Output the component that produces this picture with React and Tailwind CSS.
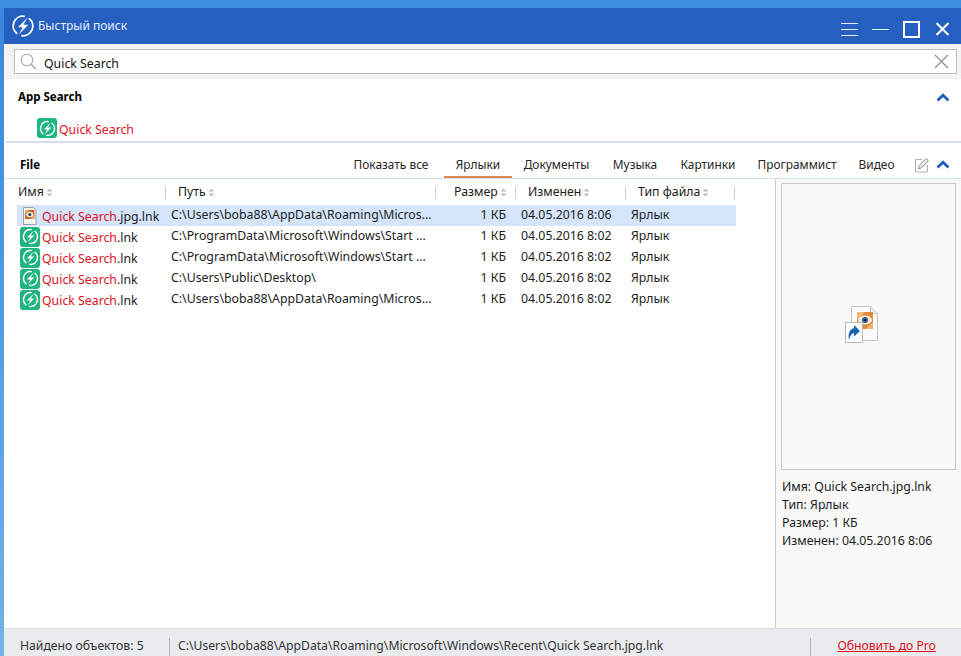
import React from 'react';

const FONT = "font-['Noto_Sans',sans-serif]";

const columns = [
  { label: 'Имя', width: 'w-[149px]', pad: 'pl-[1px]' },
  { label: 'Путь', width: 'w-[270px]', pad: 'pl-[12px]' },
  { label: 'Размер', width: 'w-[80px]', pad: 'pl-[18px]' },
  { label: 'Изменен', width: 'w-[110px]', pad: 'pl-[12px]' },
  { label: 'Тип файла', width: 'w-[109px]', pad: 'pl-[12px]' },
];

const rows = [
  { icon: 'jpg', ext: '.jpg.lnk', path: 'C:\\Users\\boba88\\AppData\\Roaming\\Micros...', date: '04.05.2016 8:06', selected: true },
  { icon: 'app', ext: '.lnk', path: 'C:\\ProgramData\\Microsoft\\Windows\\Start ...', date: '04.05.2016 8:02' },
  { icon: 'app', ext: '.lnk', path: 'C:\\ProgramData\\Microsoft\\Windows\\Start ...', date: '04.05.2016 8:02' },
  { icon: 'app', ext: '.lnk', path: 'C:\\Users\\Public\\Desktop\\', date: '04.05.2016 8:02' },
  { icon: 'app', ext: '.lnk', path: 'C:\\Users\\boba88\\AppData\\Roaming\\Micros...', date: '04.05.2016 8:02' },
];

const tabs = [
  { label: 'Показать все', width: 'w-[104px] pr-[2px]' },
  { label: 'Ярлыки', width: 'w-[68px]', active: true },
  { label: 'Документы', width: 'w-[89px]' },
  { label: 'Музыка', width: 'w-[68px]' },
  { label: 'Картинки', width: 'w-[78px]' },
  { label: 'Программист', width: 'w-[100px]' },
  { label: 'Видео', width: 'w-[59px]' },
];

const details = ['Имя: Quick Search.jpg.lnk', 'Тип: Ярлык', 'Размер: 1 КБ', 'Изменен: 04.05.2016 8:06'];

// ring broken at top right and bottom left, bolt runs through the gaps
const Bolt = ({ size, color, stroke = 2 }) => (
  <svg width={size} height={size} viewBox="0 0 24 24" fill="none">
    <path d="M13 2.300A9.700 9.700 0 0 0 5.600 19.300" stroke={color} strokeWidth={stroke} strokeLinecap="round" />
    <path d="M11 21.700A9.700 9.700 0 0 0 18.400 4.700" stroke={color} strokeWidth={stroke} strokeLinecap="round" />
    <path d="M16.500 3.500 7 13.300h4.800L7.800 20.500 17.300 10.700h-4.800z" fill={color} />
  </svg>
);

const AppIcon = ({ size = 20 }) => (
  <span className="flex shrink-0 items-center justify-center rounded-[3px] bg-[#1fb57f]" style={{ width: size, height: size }}>
    <Bolt size={size - 3} color="#ffffff" />
  </span>
);

const JpgIcon = () => (
  <svg width="20" height="20" viewBox="0 0 20 20" className="shrink-0">
    <path d="M3.500 1.500h10l2.500 2.500v14.500H3.500z" fill="#f8f6f2" stroke="#a0a0a0" />
    <rect x="5" y="4" width="9.500" height="9" fill="#c9662a" />
    <path d="M5 4h4L5 8zM14.500 13h-4l4-4z" fill="#e9b070" />
    <ellipse cx="9.800" cy="8.500" rx="3.600" ry="2.800" fill="#f7ead6" />
    <circle cx="9.800" cy="8.500" r="1.600" fill="#27406e" />
  </svg>
);

const PreviewIcon = () => (
  <svg width="34" height="38" viewBox="0 0 34 38">
    <path d="M6.500 1.500h19l7 7v27h-26z" fill="#fbfbfb" stroke="#c4c4c4" />
    <path d="M25.500 1.500v7h7" fill="#ececec" stroke="#c4c4c4" />
    <path d="M12 7h16v17H12z" fill="#e08a3c" />
    <path d="M12 7h8l-8 8zM28 24h-7l7-7z" fill="#f0b878" />
    <ellipse cx="20" cy="15" rx="7" ry="4.500" fill="#f7ead6" />
    <circle cx="20" cy="15" r="3" fill="#2f5f9c" />
    <circle cx="20" cy="15" r="1.300" fill="#10203c" />
    <rect x="0.500" y="17.500" width="17" height="20" fill="#ffffff" stroke="#b8b8b8" />
    <path d="M4 35c-1.200-6.500.5-10.500 5-12v-3l6 6-6 5.500v-3.500c-2.500.8-4 3-5 7z" fill="#1b5fb0" />
  </svg>
);

const SortMark = () => (
  <svg width="7" height="9" viewBox="0 0 7 9" className="ml-[2px] shrink-0">
    <path d="M3.500.5 6.500 3.500h-6zM3.500 8.500.5 5.500h6z" fill="#b9bdc4" />
  </svg>
);

const CollapseArrow = () => (
  <svg width="14" height="9" viewBox="0 0 14 9" fill="none">
    <path d="M1.500 7.500 7 2.300l5.500 5.200" stroke="#1f5fb8" strokeWidth="2.800" />
  </svg>
);

const App = () => {
  return (
    <div className={`flex h-[656px] w-[961px] flex-col overflow-hidden bg-[#3f8de0] text-[12.3px] text-[#1c1c1c] ${FONT}`}>
      <div className="h-2 shrink-0 bg-[#3f8de0]" />

      <div className="flex min-h-0 flex-1 bg-gradient-to-b from-[#3a86dc] to-[#6fb3e6]">
        <div className="w-1 shrink-0" />

        <div className="flex min-w-0 flex-1 flex-col bg-white">
          {/* Title bar */}
          <div className="flex h-9 shrink-0 items-center bg-[#2560c0] pl-[7px] pr-[12px] text-white">
            <Bolt size={24} color="#ffffff" stroke={1.8} />
            <span className="mb-[1px] ml-[3px] text-[12px] text-[#e6edf9]">Быстрый поиск</span>
            <div className="ml-auto mt-[6px] flex items-center">
              <svg width="17" height="13" viewBox="0 0 17 13" className="text-[#e6edf9]">
                <path d="M0 .5h17M0 6.500h17M0 12.500h17" stroke="currentColor" strokeWidth="1" />
              </svg>
              <svg width="17" height="1" viewBox="0 0 17 1" className="ml-[14px]">
                <path d="M0 .5h17" stroke="#ffffff" strokeWidth="1" />
              </svg>
              <span className="ml-[14px] h-[17px] w-[17px] border-2 border-white" />
              <svg width="13" height="14" viewBox="0 0 13 14" className="ml-[16px]">
                <path d="M.5 1l12 12M12.500 1 .5 13" stroke="#ffffff" strokeWidth="2" />
              </svg>
            </div>
          </div>

          {/* Search */}
          <div className="flex h-[35px] shrink-0 items-center bg-[#f3f3f3] pl-[10px] pr-[4px]">
            <div className="flex h-[25px] flex-1 items-center border border-[#bdbdbd] bg-white pl-[5px] pr-[7px]">
              <svg width="17" height="17" viewBox="0 0 17 17" fill="none" className="text-[#a9a9a9]">
                <circle cx="7" cy="7" r="5.800" stroke="currentColor" strokeWidth="1.100" />
                <path d="M11.200 11.200 16 16" stroke="currentColor" strokeWidth="1.500" />
              </svg>
              <span className="ml-[7px] mt-[5px] text-[#111111]">Quick Search</span>
              <svg width="15" height="15" viewBox="0 0 15 15" className="ml-auto">
                <path d="M1 1l13 13M14 1 1 14" stroke="#8f8f8f" strokeWidth="1.300" />
              </svg>
            </div>
          </div>

          {/* App Search */}
          <div className="h-[62px] shrink-0">
            <div className="flex h-[34px] items-center justify-between pl-[14px] pr-[11px] pt-[2px]">
              <span className="text-[11.5px] font-bold text-black">App Search</span>
              <CollapseArrow />
            </div>
            <div className="mt-[4px] flex items-center pl-[33px]">
              <AppIcon />
              <span className="ml-[2px] mt-[4px] text-[#e0101c]">Quick Search</span>
            </div>
          </div>

          <div className="ml-[2px] h-[2px] shrink-0 bg-[#d3deef]" />

          {/* File row with tabs */}
          <div className="flex h-[36px] shrink-0 items-stretch border-b border-[#d3e0ee] pl-[16px] pr-[11px] pt-[8px]">
            <span className="flex items-center text-[11.5px] font-bold text-black">File</span>
            <div className="ml-auto flex items-stretch">
              {tabs.map((tab) => (
                <span
                  key={tab.label}
                  className={`flex items-center justify-center text-[11.9px] text-[#262626] ${tab.width} ${tab.active ? 'border-b-2 border-[#e08a4b] pt-[2px]' : ''}`}
                >
                  {tab.label}
                </span>
              ))}
              <span className="ml-[8px] flex items-center">
                <svg width="16" height="16" viewBox="0 0 16 16" fill="none">
                  <path d="M8 2.500H1.500v12.500h12V8" stroke="#b0b0b0" />
                  <path d="M4.500 12l.8-3.500L11.800 1.800c.8-.8 2.900 1.300 2.200 2.200L7.500 10.800z" fill="#ececec" stroke="#8f8f8f" />
                </svg>
              </span>
              <span className="ml-[6px] flex items-center">
                <CollapseArrow />
              </span>
            </div>
          </div>

          {/* Main */}
          <div className="flex min-h-0 flex-1">
            <div className="flex w-[772px] shrink-0 flex-col border-r border-[#c4c9ce] pl-[13px]">
              <div className="flex h-[26px] w-[719px] shrink-0 items-center">
                {columns.map((col) => (
                  <div key={col.label} className={`flex h-[13px] items-center border-r border-[#cfcfcf] ${col.width} ${col.pad}`}>
                    <span>{col.label}</span>
                    <SortMark />
                  </div>
                ))}
              </div>
              {rows.map((row, i) => (
                <div key={i} className={`flex h-[21px] w-[719px] items-center ${row.selected ? 'bg-[#d5e5fb]' : ''}`}>
                  <div className="flex w-[154px] shrink-0 items-center pl-[3px]">
                    {row.icon === 'jpg' ? <JpgIcon /> : <AppIcon />}
                    <span className="ml-[2px] mt-[3px] whitespace-nowrap">
                      <span className="text-[#e0101c]">Quick Search</span>
                      {row.ext}
                    </span>
                  </div>
                  <div className="w-[269px] shrink-0 whitespace-nowrap">{row.path}</div>
                  <div className="w-[66px] shrink-0 text-right">1 КБ</div>
                  <div className="w-[125px] shrink-0 whitespace-nowrap pl-[15px]">{row.date}</div>
                  <div className="shrink-0">Ярлык</div>
                </div>
              ))}
            </div>

            {/* Preview */}
            <div className="flex min-w-0 flex-1 flex-col bg-[#f9f9f9] pl-[5px] pr-[5px] pt-[4px]">
              <div className="flex h-[287px] shrink-0 items-center justify-center border border-[#c8c8c8] bg-[#f9f9f9] pb-[6px] pr-[13px]">
                <PreviewIcon />
              </div>
              <div className="mt-[8px] flex flex-col pl-[1px] leading-[18px]">
                {details.map((line) => (
                  <span key={line}>{line}</span>
                ))}
              </div>
            </div>
          </div>

          {/* Status bar */}
          <div className="flex h-[28px] shrink-0 items-center border-t border-[#d3deef] bg-[#e9ebee] pl-[16px] pt-[8px] text-[12.2px] text-[#333333]">
            <span className="w-[149px] shrink-0">Найдено объектов: 5</span>
            <span className="h-[18px] w-px shrink-0 bg-[#b5b5b5]" />
            <span className="ml-[8px] whitespace-nowrap">C:\Users\boba88\AppData\Roaming\Microsoft\Windows\Recent\Quick Search.jpg.lnk</span>
            <span className="ml-auto h-[18px] w-px shrink-0 bg-[#b5b5b5]" />
            <span className="ml-[26px] mr-[25px] whitespace-nowrap text-[#e0101c] underline">Обновить до Pro</span>
          </div>
        </div>
      </div>
    </div>
  );
};

export default App;
